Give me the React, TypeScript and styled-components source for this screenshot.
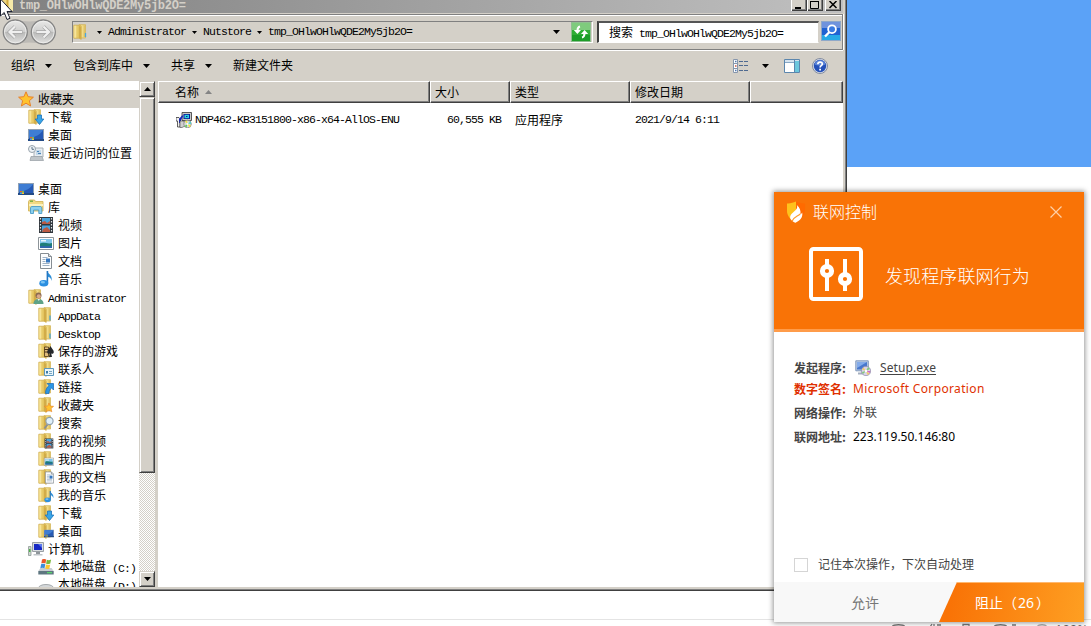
import React from "react";
import styled, { createGlobalStyle, css } from "styled-components";

const FACE = "#d4d0c8";
const SHADE = "#808080";
const DARK = "#404040";
const CJK = '"Noto Sans CJK SC"';

const GlobalStyle = createGlobalStyle`
  * { box-sizing: border-box; }
  body { margin: 0; background: #fff; }
  svg { display: block; flex: none; }
`;

const Desktop = styled.div`
  position: relative;
  width: 1091px;
  height: 626px;
  overflow: hidden;
  background: #fff;
  color: #000;
  font: 12px/18px ${CJK}, sans-serif;
  white-space: nowrap;
`;
const Upper = styled.div`
  display: flex;
  align-items: flex-start;
  height: 619px;
`;
const Wallpaper = styled.div`
  width: 244px;
  height: 167px;
  background: #5ba2f7;
`;
const StatusStrip = styled.div`
  height: 7px;
  border-top: 1px solid #e4e4e4;
  padding: 3px 0 0 888px;
  overflow: hidden;
  display: flex;
  align-items: flex-start;
`;
const ZoomLabel = styled.span`
  font: 13px/12px "Open Sans", sans-serif;
  color: #666;
  margin-left: 5px;
`;

const Mono = styled.span<{ $bold?: boolean }>`
  font-family: "Liberation Mono", monospace;
  font-size: 11.5px;
  letter-spacing: -0.9px;
  ${(p) => p.$bold && css`
    font-size: 12px;
    font-weight: 700;
    letter-spacing: -0.26px;
  `}
`;

/* Explorer window */
const Window = styled.section`
  width: 847px;
  height: 591px;
  display: flex;
  flex-direction: column;
  background: ${FACE};
  border-right: 1px solid ${DARK};
  border-bottom: 1px solid ${DARK};
  box-shadow: inset -1px -1px 0 ${SHADE};
`;
const TitleBar = styled.header`
  height: 13px;
  width: 843px;
  flex: none;
  display: flex;
  align-items: flex-start;
  overflow: hidden;
  padding: 0 2px 0 0;
  background: linear-gradient(90deg, #808080, #c0c0c0);
  color: ${FACE};
`;
const TitleText = styled.div`
  height: 13px;
  padding-left: 5px;
  flex: 1;
  line-height: 7px;
`;
const Caption = styled.button<{ $gap?: boolean }>`
  width: 16px;
  height: 11px;
  padding: 0;
  border: 0;
  border-left: 1px solid #fff;
  background: ${FACE};
  box-shadow: inset -1px -1px 0 ${DARK}, inset -2px -2px 0 ${SHADE};
  margin-left: ${(p) => (p.$gap ? 2 : 0)}px;
`;
const Rebar = styled.div`
  height: 36px;
  width: 843px;
  flex: none;
  margin-top: 1px;
  border: 1px solid ${SHADE};
  border-left: 0;
  box-shadow: inset 0 1px 0 #fff, 0 1px 0 #fff, 1px 0 0 #fff;
  display: flex;
  align-items: flex-start;
`;
const NavButtons = styled.div`
  width: 72px;
  padding: 4px 0 0 1px;
`;
const AddressBox = styled.div`
  width: 521px;
  height: 22px;
  margin-top: 6px;
  border: 1px solid ${SHADE};
  border-right-color: #fff;
  border-bottom-color: #fff;
  display: flex;
  align-items: center;
`;
const Crumb = styled.span<{ $first?: boolean }>`
  display: flex;
  align-items: center;
  margin-left: ${(p) => (p.$first ? 8 : 6)}px;
  gap: 6px;
`;
const RefreshSlot = styled.div`
  display: flex;
  align-items: center;
  gap: 11px;
  margin: 0 1px 0 auto;
`;
const SearchBox = styled.div`
  width: 222px;
  height: 22px;
  margin: 6px 2px 0 4px;
  padding-left: 10px;
  background: #fff;
  border: 2px solid ${DARK};
  border-top-color: #555;
  border-right: 1px solid ${FACE};
  border-bottom: 1px solid #fff;
  line-height: 17px;
`;
const SearchButton = styled.div`
  margin-top: 6px;
`;
const CommandBar = styled.div`
  height: 31px;
  width: 843px;
  flex: none;
  display: flex;
  align-items: center;
  padding: 0 15px 0 11px;
`;
const Command = styled.div<{ $gap?: number }>`
  display: flex;
  align-items: center;
  gap: 10px;
  margin-right: ${(p) => p.$gap ?? 0}px;
  line-height: 18px;
  padding-bottom: 2px;
  & > svg { margin-top: 2px; }
`;
const ViewTools = styled.div`
  display: flex;
  align-items: center;
  margin-left: auto;
`;
const Gap = styled.span<{ $w: number }>`
  width: ${(p) => p.$w}px;
`;
const Content = styled.div`
  display: flex;
  width: 843px;
  height: 506px;
  flex: none;
  overflow: hidden;
`;
const Tree = styled.nav`
  width: 139px;
  height: 506px;
  background: #fff;
  padding-top: 9px;
  overflow: hidden;
`;
const TreeRow = styled.div<{ $level: number; $selected?: boolean }>`
  height: 18px;
  display: flex;
  align-items: center;
  gap: 4px;
  padding-left: ${(p) => 18 + p.$level * 10}px;
  background: ${(p) => (p.$selected ? FACE : "transparent")};
  white-space: pre;
  & ${Mono} { vertical-align: -1px; }
`;
const ScrollBar = styled.div`
  width: 16px;
  display: flex;
  flex-direction: column;
  background: repeating-conic-gradient(#fff 0 25%, ${FACE} 0 50%) 0 0 / 2px 2px;
`;
const raised = css`
  background: ${FACE};
  border: 1px solid ${FACE};
  border-right-color: ${DARK};
  border-bottom-color: ${DARK};
  box-shadow: inset 1px 1px 0 #fff, inset -1px -1px 0 ${SHADE};
`;
const ScrollArrow = styled.div`
  ${raised}
  height: 16px;
  display: flex;
  align-items: center;
  justify-content: center;
`;
const Thumb = styled.div`
  ${raised}
  height: 376px;
  margin-bottom: auto;
`;
const Splitter = styled.div`
  width: 3px;
`;
const FilePane = styled.main`
  flex: 1;
  background: #fff;
`;
const HeaderRow = styled.div`
  display: flex;
  height: 22px;
`;
const HeaderCell = styled.div<{ $w: number; $pad?: number }>`
  width: ${(p) => p.$w}px;
  padding-left: ${(p) => p.$pad ?? 4}px;
  display: flex;
  align-items: center;
  gap: 6px;
  background: ${FACE};
  border: 1px solid #fff;
  border-right-color: ${DARK};
  border-bottom-color: ${DARK};
  box-shadow: inset -1px -1px 0 ${SHADE};
`;
const FileRow = styled.div`
  display: grid;
  grid-template-columns: 236px 90px 13px 120px 120px;
  align-items: center;
  height: 18px;
  margin: 7px 0 0 18px;
  & ${Mono} { padding-top: 1px; }
`;
const FileName = styled.div`
  display: flex;
  align-items: center;
  gap: 3px;
`;
const FileSize = styled.div`
  display: flex;
  justify-content: flex-end;
  padding-right: 1px;
`;

/* Network control popup */
const Popup = styled.aside`
  position: absolute;
  left: 774px;
  top: 192px;
  width: 310px;
  height: 430px;
  display: flex;
  flex-direction: column;
  background: #fff;
  box-shadow: 0 0 5px 1px rgba(0, 0, 0, 0.42);
`;
const PopupHead = styled.div`
  height: 140px;
  background: #f97306;
  border-bottom: 3px solid #ff9c4a;
  color: #fff;
`;
const PopupTitle = styled.div`
  display: flex;
  align-items: center;
  height: 40px;
  padding: 0 22px 0 12px;
  gap: 7px;
  font-size: 16px;
  font-weight: 300;
  line-height: 20px;
  & > span { padding-bottom: 2px; }
  & > :last-child { margin-left: auto; }
`;
const PopupBanner = styled.div`
  display: flex;
  align-items: center;
  gap: 22px;
  padding: 15px 0 0 35px;
  font-size: 18px;
  font-weight: 300;
  line-height: 26px;
  & > span { padding-top: 2px; letter-spacing: 0.1px; }
`;
const Details = styled.dl`
  margin: 0;
  padding: 25px 0 0 20px;
  flex: 1;
`;
const Detail = styled.div<{ $color?: string; $h: number }>`
  display: flex;
  align-items: center;
  height: ${(p) => p.$h}px;
  color: ${(p) => p.$color ?? "#444"};
`;
const Term = styled.dt`
  width: 59px;
  font-weight: 700;
`;
const Value = styled.dd<{ $ls?: number; $color?: string; $link?: boolean }>`
  margin: 0;
  display: flex;
  align-items: center;
  font-family: "Noto Sans", ${CJK}, sans-serif;
  letter-spacing: ${(p) => p.$ls ?? 0}px;
  color: ${(p) => p.$color ?? "inherit"};
  text-decoration: ${(p) => (p.$link ? "underline" : "none")};
  text-underline-offset: 2px;
`;
const Remember = styled.label`
  display: flex;
  align-items: center;
  gap: 10px;
  padding-left: 20px;
  height: 18px;
  margin-bottom: 8px;
  color: #444;
  & > :last-child { padding-bottom: 2px; }
`;
const Box = styled.span`
  width: 14px;
  height: 14px;
  border: 1px solid #d5d5d5;
`;
const Actions = styled.div`
  display: flex;
  height: 40px;
  background: #f8f8f8;
  font-size: 14px;
  line-height: 41px;
`;
const Allow = styled.div`
  width: 165px;
  padding-left: 77px;
  color: #777;
`;
const Block = styled.div`
  flex: 1;
  padding-left: 36px;
  color: #fff;
  background: linear-gradient(100deg, #f97306 10%, #fe9f22);
  clip-path: polygon(18px 0, 100% 0, 100% 100%, 0 100%);
  box-shadow: inset 0 1px 0 #ffb870;
`;
const Digits = styled.span`
  font-family: "Noto Sans", sans-serif;
  margin: 0 2px 0 1px;
`;
const Cursor = styled.svg`
  position: absolute;
  left: 0;
  top: 0;
`;

const Tri = ({ w = 7, up = false, color = "#000" }: { w?: number; up?: boolean; color?: string }) => {
  const h = Math.ceil(w / 2);
  return (
    <svg width={w} height={h} viewBox={`0 0 ${w} ${h}`}>
      <path fill={color} d={up ? `M0 ${h}L${w / 2} 0L${w} ${h}z` : `M0 0H${w}L${w / 2} ${h}z`} />
    </svg>
  );
};

const Svg16 = ({ children }: { children: React.ReactNode }) => (
  <svg width="16" height="16" viewBox="0 0 16 16">{children}</svg>
);

const FolderBody = () => (
  <>
    <path d="M6 .7h6.500v13.300H6z" fill="#f2dc88" stroke="#cfae4c" strokeWidth=".7" />
    <path d="M10.500 1.200h1.600v12.300h-1.600z" fill="#e0c266" />
    <path d="M.8 1.200h6.400l1 1.200v13l-2-1.200H.8z" fill="#e8cb68" stroke="#cda845" strokeWidth=".7" />
    <path d="M1.300 1.700h2v12h-2z" fill="#f6e49a" />
    <path d="M5.800 1.700l2.200 1v12.400l-2.200-1.300z" fill="#d2ac48" />
  </>
);

const Note = () => (
  <>
    <path d="M9.500 0c.5 3.500 5.500 4 4 10-.3-2.500-1.800-4-3.500-4.200z" fill="#2f8fd8" />
    <path d="M8.600 0h1.600v12H8.600z" fill="#2277c4" />
    <ellipse cx="5.800" cy="12.300" rx="4.500" ry="3.300" fill="#2b8fe0" />
    <ellipse cx="4.800" cy="11.200" rx="2.200" ry="1.200" fill="#7cc4f4" />
  </>
);
const Star = () => (
  <path d="M8 .8l2.100 4.900 5.300.5-4 3.500 1.200 5.300L8 12.200 3.400 15l1.200-5.300-4-3.500 5.300-.5z" fill="#ffc32e" stroke="#e8822a" strokeWidth="1" />
);
const Film = () => (
  <>
    <path d="M1 0h14v16H1z" fill="#30363c" />
    <path d="M4 1h8v6H4zM4 8.500h8V15H4z" fill="#49a3dc" />
    <path d="M4 5l3-1 2 2 3-2v3H4zM5 12l4-2 3 3v2H4z" fill="#bb5b45" />
    <path d="M2.500 1v14M13.500 1v14" stroke="#dfe5e8" strokeWidth="1.200" strokeDasharray="1.500 1.500" />
  </>
);
const Picture = () => (
  <>
    <path d="M.5 2.500h15v12H.5z" fill="#fff" stroke="#8d9499" />
    <path d="M2 4h12v9H2z" fill="#7fc4ea" />
    <path d="M2 8.500c4-2 8 1 12-.5V13H2z" fill="#1e7d78" />
    <path d="M2 11h12v2H2z" fill="#2f67ab" />
    <path d="M3 5h5v1.500H3z" fill="#e8f6fc" />
  </>
);
const Doc = () => (
  <>
    <path d="M2.500.5h8l3 3v12h-11z" fill="#fcfdfe" stroke="#868d93" />
    <path d="M10.500.5v3h3" fill="#d7dde2" stroke="#868d93" />
    <path d="M4.500 4.500h5M4.500 6.500h3M4.500 8.500h3M4.500 10.500h7M4.500 12.500h7" stroke="#9fb1c4" />
    <path d="M8 5.500h4v4H8z" fill="#3577c0" />
  </>
);
const Screen = () => (
  <>
    <path d="M0 2h16v12H0z" fill="#8fa0b4" />
    <path d="M1 3h14v9H1z" fill="#2659b4" />
    <path d="M1 3h14c-2 4-7 7-14 8z" fill="#3f7dd3" />
    <path d="M0 12h16v2H0z" fill="#244b85" />
    <path d="M2 10h2v1.500H2z" fill="#e8602c" /><path d="M4 10h2v1.500H4z" fill="#7cc043" />
    <path d="M2 11.500h2V13H2z" fill="#3ba5ea" /><path d="M4 11.500h2V13H4z" fill="#ffc82e" />
  </>
);
const DownArrow = () => (
  <path d="M9.500 6h4v4h2.300L11.500 15.500 7.200 10h2.300z" fill="#38a5e8" stroke="#1d72b8" strokeWidth=".8" />
);

const Overlay = ({ children }: { children: React.ReactNode }) => (
  <g transform="translate(6 5.500) scale(.62)">{children}</g>
);

const icons: Record<string, React.ReactNode> = {
  star: <Star />,
  download: <><FolderBody /><DownArrow /></>,
  screen: <Screen />,
  recent: (
    <>
      <path d="M6 3h9v9H6z" fill="#e8edf1" stroke="#a9b1b7" />
      <path d="M8 5h5v5H8z" fill="#c3d8e8" />
      <path d="M9 6h2v1H9zM10 8h3v1h-3z" fill="#4a84b8" />
      <path d="M3 11.500h11l1.500 4H2z" fill="#bfc5c9" stroke="#979ea4" strokeWidth=".7" />
      <circle cx="4" cy="4" r="3.500" fill="#eef3f6" stroke="#98a3ac" />
      <path d="M4 2v2.300h2" stroke="#5d7285" fill="none" />
    </>
  ),
  library: (
    <>
      <path d="M.5 2.500l1-1.500h5l1 1.500h7.500V12H.5z" fill="#f0d983" stroke="#d3b55b" strokeWidth=".9" />
      <path d="M2 2.200h3" stroke="#61a83b" strokeWidth="1.200" />
      <path d="M1 5h14v2H1z" fill="#fbf1be" />
      <path d="M2.500 14.500V8.800l1-1.300h9.300l1 1.300v5.700h-3V11H5.500v3.500z" fill="#8bd0ee" stroke="#4b9cc8" strokeWidth=".9" />
    </>
  ),
  film: <Film />,
  picture: <Picture />,
  doc: <Doc />,
  note: <Note />,
  user: (
    <>
      <FolderBody />
      <circle cx="10.500" cy="6.500" r="3" fill="#8a6a50" />
      <circle cx="10.800" cy="7.300" r="2" fill="#d9a98a" />
      <path d="M5.500 15c0-3.500 2-5 5-5s5 1.500 5 5z" fill="#5fa287" />
      <path d="M9.500 10h2.500l-1.200 2z" fill="#e9f2ee" />
    </>
  ),
  folder: <><FolderBody /><path d="M12 8.500v5" stroke="#4aa7dc" strokeWidth="1.300" /></>,
  games: (
    <>
      <FolderBody />
      <path d="M6.500 4h4v9.500h-4z" fill="#e0bc7c" stroke="#4c3517" strokeWidth=".8" />
      <path d="M6.500 6.500h4M6.500 9h4" stroke="#4c3517" />
      <path d="M12.500 3c1.200 2.500 3.300 4 3.300 6s-2 2.200-2.600 1.200l.8 3.800h-3l.8-3.800c-.6 1-2.600.8-2.600-1.200s2.100-3.500 3.300-6z" fill="#26282c" />
    </>
  ),
  contacts: <><FolderBody /><path d="M6.500 7.500h9v7h-9z" fill="#e9f5fb" stroke="#5d97bd" /><path d="M8 10h2v2.500H8z" fill="#3d7ca9" /><path d="M11 10.500h3M11 12.500h3" stroke="#7aa7c4" /></>,
  link: <><FolderBody /><path d="M9 4.500h6.500V11l-2-2c-1.500 1.200-2.500 3-2.500 5.500H7.500c0-3.500 1-6 3.500-8z" fill="#2c96e4" stroke="#1769b4" strokeWidth=".7" /></>,
  favFolder: <><FolderBody /><Overlay><Star /></Overlay></>,
  search: <><FolderBody /><path d="M9.500 9.500L6.500 13.500" stroke="#8b8f94" strokeWidth="2" /><circle cx="11.500" cy="6" r="3.600" fill="#dff0fa" stroke="#8d9eae" strokeWidth="1.100" /></>,
  filmFolder: <><FolderBody /><Overlay><Film /></Overlay></>,
  pictureFolder: <><FolderBody /><Overlay><Picture /></Overlay></>,
  docFolder: <><FolderBody /><g transform="translate(5.500 2.500) scale(.75)"><Doc /></g></>,
  noteFolder: <><FolderBody /><g transform="translate(5.500 4) scale(.72)"><Note /></g></>,
  screenFolder: <><FolderBody /><Overlay><Screen /></Overlay></>,
  computer: (
    <>
      <path d="M4.500 1.500h11v9h-11z" fill="#d9dde0" stroke="#9aa0a5" />
      <path d="M6 3h8v6H6z" fill="#1729c4" /><path d="M10 3h4v4z" fill="#5b78ee" />
      <path d="M8 11h4v2H8z" fill="#8f969b" /><path d="M5.500 13h9v1.500h-9z" fill="#bfc4c8" />
      <path d="M.5 5.500h2.500v9H.5z" fill="#cfd6d2" stroke="#8e9994" strokeWidth=".8" /><path d="M1 8h1.500v3H1z" fill="#4fb44a" />
    </>
  ),
  drive: (
    <>
      <path d="M2.500 9h11l2.200 3H.3z" fill="#c7cdd1" />
      <path d="M.3 12h15.400v3.500H.3z" fill="#5e7680" /><path d="M9 13h5v1.300H9z" fill="#59d46d" />
      <path d="M4 .5c1.500-.8 2.900-.6 4.200 0L7.500 4.500c-1.300-.6-2.700-.7-4.200 0z" fill="#e9582b" />
      <path d="M8.800.8c1.400.6 2.800.5 4.300-.2l-.8 4c-1.500.7-2.900.8-4.200.2z" fill="#79b93c" />
      <path d="M3.100 5.200c1.500-.7 2.900-.6 4.200 0l-.8 4c-1.300-.7-2.700-.7-4.200 0z" fill="#3b8ddb" />
      <path d="M7.900 5.500c1.400.6 2.800.6 4.300-.1l-.8 4c-1.500.7-2.900.7-4.200.1z" fill="#fbc62f" />
    </>
  ),
  driveD: <><ellipse cx="8" cy="11" rx="7.500" ry="3.500" fill="#d5d8da" stroke="#a5aaad" /></>,
};

type Row = [icon: string, level: number, text: string, mono?: string];
const tree: (Row | null)[] = [
  ["star", 0, "收藏夹"],
  ["download", 1, "下载"],
  ["screen", 1, "桌面"],
  ["recent", 1, "最近访问的位置"],
  null,
  ["screen", 0, "桌面"],
  ["library", 1, "库"],
  ["film", 2, "视频"],
  ["picture", 2, "图片"],
  ["doc", 2, "文档"],
  ["note", 2, "音乐"],
  ["user", 1, "", "Administrator"],
  ["folder", 2, "", "AppData"],
  ["folder", 2, "", "Desktop"],
  ["games", 2, "保存的游戏"],
  ["contacts", 2, "联系人"],
  ["link", 2, "链接"],
  ["favFolder", 2, "收藏夹"],
  ["search", 2, "搜索"],
  ["filmFolder", 2, "我的视频"],
  ["pictureFolder", 2, "我的图片"],
  ["docFolder", 2, "我的文档"],
  ["noteFolder", 2, "我的音乐"],
  ["download", 2, "下载"],
  ["screenFolder", 2, "桌面"],
  ["computer", 1, "计算机"],
  ["drive", 2, "本地磁盘", " (C:)"],
  ["driveD", 2, "本地磁盘", " (D:)"],
];

const NavIcon = () => (
  <svg width="58" height="26" viewBox="0 0 58 26">
    <defs>
      <linearGradient id="nav" x1="0" y1="0" x2="0" y2="1">
        <stop offset="0" stopColor="#e9e9e8" /><stop offset=".48" stopColor="#cfcfce" />
        <stop offset=".52" stopColor="#b9b9b8" /><stop offset="1" stopColor="#e2e2e1" />
      </linearGradient>
    </defs>
    <path d="M14 .5q14.500 4 29 0v25q-14.500-4-29 0z" fill="#bcbab6" />
    {[14.300, 42.300].map((x) => (
      <g key={x}>
        <circle cx={x} cy="13" r="12" fill="url(#nav)" stroke="#858585" strokeWidth="1.300" />
        <circle cx={x} cy="13" r="10.800" fill="none" stroke="#f1f1f0" strokeWidth=".8" />
      </g>
    ))}
    <g fill="none" stroke="#a6a6a6" strokeWidth="3.600">
      <path d="M21.500 13H8.500M14 7.500L8.500 13l5.500 5.500M35 13h13M42.500 7.500L48 13l-5.500 5.500" />
    </g>
    <g fill="none" stroke="#efefef" strokeWidth="2.200">
      <path d="M21 13H9M14 7.500L8.500 13l5.500 5.500M35.500 13h12M42.500 7.500L48 13l-5.500 5.500" />
    </g>
  </svg>
);

const RefreshIcon = () => (
  <svg width="20" height="20" viewBox="0 0 20 20">
    <path d="M0 0h20v20H0z" fill="#8fbf90" />
    <path d="M1 1h18v18H1z" fill="#2fae35" /><path d="M1 1h18v7H1z" fill="#7fcb7d" /><path d="M1 13h18v6H1z" fill="#1c9d28" />
    <path d="M9 4.500C7 5 6.500 6.500 6.500 8.500M11 15.500c2-.5 2.500-2 2.500-4" fill="none" stroke="#fff" strokeWidth="2" />
    <path d="M2.800 8h7.200l-3.600 4zM10 12h7.200l-3.600-4z" fill="#fff" />
  </svg>
);
const SearchIcon = () => (
  <svg width="20" height="20" viewBox="0 0 20 20">
    <path d="M0 0h20v20H0z" fill="#8fa8c8" />
    <path d="M1 1h18v18H1z" fill="#1f62d2" /><path d="M1 1h18v6H1z" fill="#6f93dd" /><path d="M1 14h18v5H1z" fill="#26a9e6" />
    <path d="M8.500 11L4 15.500" stroke="#fff" strokeWidth="2.400" />
    <circle cx="11" cy="8.200" r="3.900" fill="#3b7be0" stroke="#fff" strokeWidth="1.800" />
  </svg>
);
const ViewsIcon = () => (
  <svg width="16" height="14" viewBox="0 0 16 14">
    <path d="M.5.500h4v13h-4z" fill="#fff" stroke="#8796ac" />
    <path d="M2 2.500h1.500M2 11.500h1.500" stroke="#4f79b0" strokeWidth="1.500" /><path d="M2 7h1.500" stroke="#c8553e" strokeWidth="1.500" />
    <path d="M.5 4.500h4M.5 9.500h4" stroke="#8796ac" />
    <path d="M6 2.500h4M11 2.500h4M6 6.500h4M11 6.500h4M6 11.500h4M11 11.500h4" stroke="#4f6a90" />
  </svg>
);
const PaneIcon = () => (
  <svg width="16" height="14" viewBox="0 0 16 14">
    <path d="M.5.500h15v13H.5z" fill="#fff" stroke="#5c86ad" />
    <path d="M1 1h14v2H1z" fill="#d5e3ef" /><path d="M1 3.500h9" stroke="#87a8c6" />
    <path d="M10.500 1v12.500" stroke="#5c86ad" /><path d="M11 2h4v11h-4z" fill="#6cc7dd" />
  </svg>
);
const HelpIcon = () => (
  <svg width="16" height="16" viewBox="0 0 16 16">
    <circle cx="8" cy="8" r="7.500" fill="#d8deea" stroke="#7b8598" strokeWidth=".9" />
    <circle cx="8" cy="8" r="6.200" fill="#2450b8" /><path d="M2.500 6.500a5.700 5.700 0 0 1 11 0c-3 1.500-8 1.500-11 0z" fill="#5d85d8" />
    <path d="M5.800 6.200c.2-3 4.800-2.600 4.500 0-.2 1.500-2.200 1.500-2.200 3.300" fill="none" stroke="#fff" strokeWidth="1.700" />
    <path d="M7.200 10.800H9v1.700H7.200z" fill="#fff" />
  </svg>
);
const InstallerIcon = () => (
  <Svg16>
    <path d="M6 .5h9.500v8H6z" fill="#c8c8c8" stroke="#333" strokeWidth=".8" />
    <path d="M7.500 2h6.500v5H7.500z" fill="#0b1a9a" /><path d="M8.500 2.800h4.500v3.400H8.500z" fill="#27d3dd" /><path d="M10 4h1.500v1H10z" fill="#0b1a9a" />
    <path d="M0 5.500h3l1 1.500v8H1.500V9H0z" fill="#f1f1f1" stroke="#222" strokeWidth=".7" />
    <path d="M3 7l3-3.500h1.500L5 8v3H3z" fill="#1424b8" /><path d="M4 9h4l1 5-3 1.500H4z" fill="#d0d0d0" stroke="#444" strokeWidth=".6" />
    <circle cx="11.500" cy="12" r="3.800" fill="#d9d9d9" stroke="#777" strokeWidth=".7" />
    <path d="M11.500 12L9 9.500l2-1zM11.500 12l3.500 1.500-1.500 2z" fill="#f2e63a" /><path d="M11.500 12l3-2.500.8 2z" fill="#39d6d0" />
    <path d="M11.500 12l-3 2 2 1.500z" fill="#5cc95c" /><circle cx="11.500" cy="12" r="1" fill="#fff" />
  </Svg16>
);
const SetupIcon = () => (
  <Svg16>
    <path d="M.8.800h12.500v10H.8z" fill="#b9cbe4" stroke="#8299bc" />
    <path d="M2 2h10v7.500H2z" fill="#4777cd" /><path d="M2 2h10L2 8z" fill="#83abea" />
    <path d="M3 12.500h6v2H3z" fill="#a4afbf" />
    <circle cx="11" cy="11" r="4.700" fill="#d9d3e8" stroke="#8b87a6" strokeWidth=".7" />
    <path d="M11 11L7 9.500l1.500-2zM11 11l3.500 2.500-2 1.500z" fill="#f2ce66" /><path d="M11 11l2-4 2 2zM11 11l-3 3-1.200-2z" fill="#82c97f" />
    <path d="M11 11l4.300 0-.5 2z" fill="#d46ac0" /><circle cx="11" cy="11" r="1.200" fill="#fff" />
  </Svg16>
);
const ShieldIcon = () => (
  <svg width="20" height="22" viewBox="0 0 20 22">
    <path d="M1 2.500C4.500 2.800 7 1.500 10 .5v21C4.500 18.500.7 15 1 9z" fill="#ffc21c" />
    <path d="M10 .5c3 1 5.500 2.300 9 2 .3 9 .5 14-9 19z" fill="#ff6a00" />
    <path d="M10.800 4c1.200 3-.5 4.500-3 6.800C5 13.200 3.500 15 4.500 18c1.200 1.900 3 3 5 3.800 5-2.500 7.500-5.300 6.700-10.300-.6 1-1.200 1.500-1.800 1.800.6-3.500-.6-7-3.600-9.300z" fill="#fff" />
    <path d="M14.200 13c-3 2.500-6.500 3-8 7" fill="none" stroke="#ff9d2c" strokeWidth="1.200" />
  </svg>
);
const SlidersIcon = () => (
  <svg width="54" height="54" viewBox="0 0 54 54">
    <rect x="2" y="2" width="50" height="50" rx="2.500" fill="none" stroke="#fff" strokeWidth="4" />
    <path d="M18 12v32M36 12v32" stroke="#fff" strokeWidth="4" />
    <circle cx="18" cy="24" r="4.600" fill="#f97306" stroke="#fff" strokeWidth="5" />
    <circle cx="36" cy="32" r="4.600" fill="#f97306" stroke="#fff" strokeWidth="5" />
  </svg>
);

export default function App() {
  return (
    <>
      <GlobalStyle />
      <Desktop>
        <Upper>
          <Window>
            <TitleBar>
              <svg width="14" height="12" viewBox="0 0 14 12">
                <path d="M2 0h6v10l-6-1z" fill="#edd580" /><path d="M8 0h5v11l-5-1z" fill="#f6e9a8" /><path d="M6.500 0h2v11l-2-1z" fill="#cfa73c" />
              </svg>
              <TitleText><Mono $bold>tmp_OHlwOHlwQDE2My5jb2O=</Mono></TitleText>
              <Caption><svg width="14" height="10" viewBox="0 0 14 10"><path d="M3 6h6v2H3z" /></svg></Caption>
              <Caption><svg width="14" height="10" viewBox="0 0 14 10"><path d="M2.500-.5h8v8h-8z" fill="none" stroke="#000" /><path d="M2 0h9v1H2z" /></svg></Caption>
              <Caption $gap><svg width="14" height="10" viewBox="0 0 14 10"><path d="M3.500 0l7 7M10.500 0l-7 7" stroke="#000" strokeWidth="1.500" /></svg></Caption>
            </TitleBar>
            <Rebar>
              <NavButtons><NavIcon /></NavButtons>
              <AddressBox>
                <Svg16><FolderBody /><path d="M12.500 9v4" stroke="#4aa7dc" strokeWidth="1.300" /></Svg16>
                <Crumb $first><Tri w={5} /><Mono>Administrator</Mono></Crumb>
                <Crumb><Tri w={5} /><Mono>Nutstore</Mono></Crumb>
                <Crumb><Tri w={5} /><Mono>tmp_OHlwOHlwQDE2My5jb2O=</Mono></Crumb>
                <RefreshSlot><Tri /><RefreshIcon /></RefreshSlot>
              </AddressBox>
              <SearchBox>搜索<Mono>&nbsp;tmp_OHlwOHlwQDE2My5jb2O=</Mono></SearchBox>
              <SearchButton><SearchIcon /></SearchButton>
            </Rebar>
            <CommandBar>
              <Command $gap={21}>组织<Tri /></Command>
              <Command $gap={21}>包含到库中<Tri /></Command>
              <Command $gap={21}>共享<Tri /></Command>
              <Command>新建文件夹</Command>
              <ViewTools>
                <ViewsIcon /><Gap $w={13} /><Tri /><Gap $w={15} /><PaneIcon /><Gap $w={12} /><HelpIcon />
              </ViewTools>
            </CommandBar>
            <Content>
              <Tree>
                {tree.map((row, i) =>
                  row ? (
                    <TreeRow key={i} $level={row[1]} $selected={i === 0}>
                      <Svg16>{icons[row[0]]}</Svg16>
                      <span>{row[2]}{row[3] && <Mono>{row[3]}</Mono>}</span>
                    </TreeRow>
                  ) : (
                    <TreeRow key={i} $level={0} />
                  )
                )}
              </Tree>
              <ScrollBar>
                <ScrollArrow><Tri up /></ScrollArrow>
                <Thumb />
                <ScrollArrow><Tri /></ScrollArrow>
              </ScrollBar>
              <Splitter />
              <FilePane>
                <HeaderRow>
                  <HeaderCell $w={272} $pad={16}>名称<Tri up color="#848484" /></HeaderCell>
                  <HeaderCell $w={80}>大小</HeaderCell>
                  <HeaderCell $w={120}>类型</HeaderCell>
                  <HeaderCell $w={120}>修改日期</HeaderCell>
                  <HeaderCell $w={93} />
                </HeaderRow>
                <FileRow>
                  <FileName><InstallerIcon /><Mono>NDP462-KB3151800-x86-x64-AllOS-ENU</Mono></FileName>
                  <FileSize><Mono>60,555 KB</Mono></FileSize>
                  <span />
                  <span>应用程序</span>
                  <Mono>2021/9/14 6:11</Mono>
                </FileRow>
              </FilePane>
            </Content>
          </Window>
          <Wallpaper />
        </Upper>
        <StatusStrip>
          <svg width="162" height="4" viewBox="0 0 162 4" fill="none" stroke="#777" strokeWidth="1.300">
            <path d="M4 4c1-3 12-3 13 0M42 4l2-3M46 1v3M49 2h4M75 4V1.500h6V4M106 4c1-3 12-3 13 0M124 2h4" />
            <path d="M149 4c1-3 9-3 10 0" stroke="#aaa" />
          </svg>
          <ZoomLabel>100%</ZoomLabel>
        </StatusStrip>

        <Popup>
          <PopupHead>
            <PopupTitle>
              <ShieldIcon />
              <span>联网控制</span>
              <svg width="12" height="12" viewBox="0 0 12 12"><path d="M.5.500l11 11M11.500.500l-11 11" stroke="#ffd0a6" strokeWidth="1.200" /></svg>
            </PopupTitle>
            <PopupBanner><SlidersIcon /><span>发现程序联网行为</span></PopupBanner>
          </PopupHead>
          <Details>
            <Detail $h={21}><Term>发起程序:</Term><Value><Gap $w={2} /><SetupIcon /><Gap $w={9} /></Value><Value $link $ls={0.1}>Setup.exe</Value></Detail>
            <Detail $h={22} $color="#e03000"><Term>数字签名:</Term><Value $ls={0.35}>Microsoft Corporation</Value></Detail>
            <Detail $h={25}><Term>网络操作:</Term><Value>外联</Value></Detail>
            <Detail $h={24}><Term>联网地址:</Term><Value $color="#000">223.119.50.146:80</Value></Detail>
          </Details>
          <Remember><Box /><span>记住本次操作，下次自动处理</span></Remember>
          <Actions>
            <Allow>允许</Allow>
            <Block>阻止（<Digits>26</Digits>）</Block>
          </Actions>
        </Popup>

        <Cursor width="14" height="21" viewBox="0 0 14 21">
          <path d="M.5-1v17l3.700-3.500 2.800 7 3-1.200-3-6.800h5z" fill="#fff" stroke="#1b2030" />
        </Cursor>
      </Desktop>
    </>
  );
}
